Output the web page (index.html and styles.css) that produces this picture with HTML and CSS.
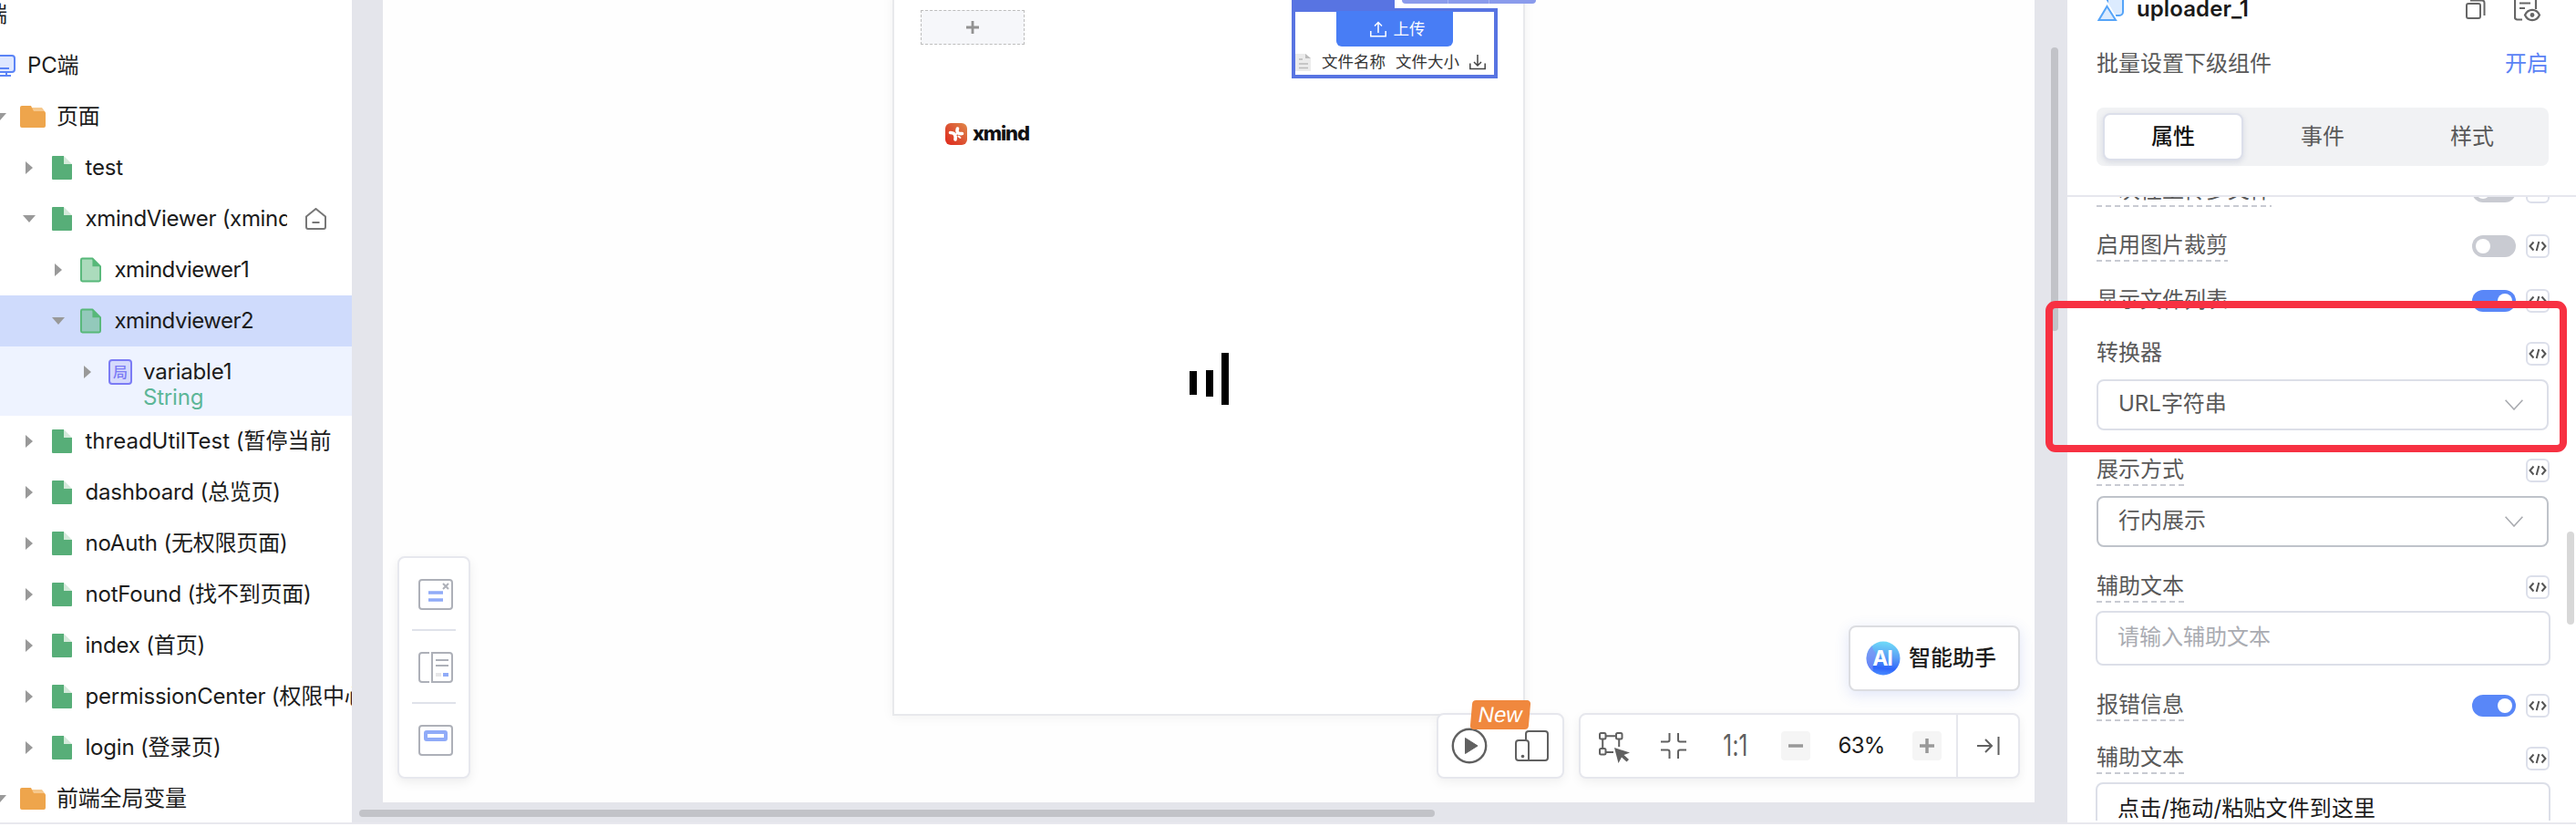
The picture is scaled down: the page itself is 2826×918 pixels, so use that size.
FILE: index.html
```html
<!DOCTYPE html>
<html lang="zh-CN">
<head>
<meta charset="utf-8">
<title>uploader_1</title>
<link rel="stylesheet" href="styles.css">
</head>
<body>
<svg class="defs" width="0" height="0">
  <symbol id="file" viewBox="0 0 22 26"><path fill="#d5eadb" d="M13 0v9h9z"/><path fill="#57ae78" d="M1 0h12v9h9v16a1 1 0 0 1-1 1H1a1 1 0 0 1-1-1V1a1 1 0 0 1 1-1z"/></symbol>
  <symbol id="view" viewBox="0 0 24 28"><path fill="#57b879" fill-opacity=".5" stroke="#57b879" stroke-width="2" stroke-linejoin="round" d="M2.500 1H14l9 9v15.500a1.500 1.500 0 0 1-1.500 1.500h-19A1.500 1.500 0 0 1 1 25.500v-23A1.500 1.500 0 0 1 2.500 1z"/><path fill="#57b879" d="M14 1v9h9z"/></symbol>
  <symbol id="folder" viewBox="0 0 28 24"><path fill="#f6c88c" d="M12 2h12l3 4v4H12z"/><path fill="#eea54c" d="M2 0h10l3 6h11a2 2 0 0 1 2 2v14a2 2 0 0 1-2 2H2a2 2 0 0 1-2-2V2a2 2 0 0 1 2-2z"/></symbol>
  <symbol id="code" viewBox="0 0 26 26"><rect x="1" y="1" width="24" height="24" rx="5" fill="#fff" stroke="#dcdfea" stroke-width="2"/><path fill="none" stroke="#555" stroke-width="2" d="M8.500 8.500 4.500 13l4 4.500M17.500 8.500l4 4.500-4 4.500M14.300 8l-2.600 10"/></symbol>
  <symbol id="chev" viewBox="0 0 20 12"><path fill="none" stroke="#a9abb0" stroke-width="1.600" d="M.6.8 10 11 19.400.8"/></symbol>
</svg>

<main class="app">
  <aside class="tree">
    <div class="row clipped">端</div>
    <div class="row pc">
      <svg class="ic-pc" width="28" height="24" viewBox="0 0 28 24"><rect x="1" y="1" width="26" height="18" rx="3" fill="#dfe8ff" stroke="#5b84f6" stroke-width="2"/><path stroke="#5b84f6" stroke-width="2" d="M6 15h15M5 23h18M10 19v4M18 19v4"/></svg>
      <span>PC端</span>
    </div>
    <div class="row l1"><i class="down"></i><svg class="ic"><use href="#folder"/></svg><span>页面</span></div>
    <div class="row l2"><i class="right"></i><svg class="ic"><use href="#file"/></svg><span>test</span></div>
    <div class="row l2"><i class="down"></i><svg class="ic"><use href="#file"/></svg><span class="cut">xmindViewer (xmindViewer)</span>
      <svg class="home" width="23" height="24" viewBox="0 0 23 24"><path fill="none" stroke="#777" stroke-width="2" stroke-linejoin="round" d="M1 9.500 11.500 1 22 9.500V21a2 2 0 0 1-2 2H3a2 2 0 0 1-2-2zM7.500 16h8"/></svg></div>
    <div class="row l3"><i class="right"></i><svg class="ic"><use href="#view"/></svg><span>xmindviewer1</span></div>
    <div class="row l3 selected"><i class="down"></i><svg class="ic"><use href="#view"/></svg><span>xmindviewer2</span></div>
    <div class="child">
      <div class="row l4"><i class="right"></i><b class="badge">局</b><span>variable1</span></div>
      <div class="type">String</div>
    </div>
    <div class="row l2"><i class="right"></i><svg class="ic"><use href="#file"/></svg><span class="wide">threadUtilTest (暂停当前</span></div>
    <div class="row l2"><i class="right"></i><svg class="ic"><use href="#file"/></svg><span>dashboard (总览页)</span></div>
    <div class="row l2"><i class="right"></i><svg class="ic"><use href="#file"/></svg><span>noAuth (无权限页面)</span></div>
    <div class="row l2"><i class="right"></i><svg class="ic"><use href="#file"/></svg><span>notFound (找不到页面)</span></div>
    <div class="row l2"><i class="right"></i><svg class="ic"><use href="#file"/></svg><span>index (首页)</span></div>
    <div class="row l2"><i class="right"></i><svg class="ic"><use href="#file"/></svg><span>permissionCenter (权限中心)</span></div>
    <div class="row l2"><i class="right"></i><svg class="ic"><use href="#file"/></svg><span>login (登录页)</span></div>
    <div class="row l1"><i class="down"></i><svg class="ic"><use href="#folder"/></svg><span>前端全局变量</span></div>
  </aside>

  <section class="stage">
    <div class="canvas">
      <div class="page">
        <div class="slot"><svg width="14" height="14" viewBox="0 0 14 14"><path stroke="#929292" stroke-width="2.800" d="M7 0v14M0 7h14"/></svg></div>
        <div class="logo">
          <svg width="24" height="24" viewBox="0 0 24 24"><defs><linearGradient id="lg" x1="1" y1="0" x2="0" y2="1"><stop offset="0" stop-color="#e08a4a"/><stop offset=".5" stop-color="#dc5433"/><stop offset="1" stop-color="#e0281c"/></linearGradient></defs><rect width="24" height="24" rx="6" fill="url(#lg)"/><path fill="none" stroke="#fff" stroke-width="3.600" stroke-linecap="round" d="M13.500 6c-1.500 4 .5 6 5 5.500M5.500 10.500c4.500 0 6.500 3 5.500 7.500"/><path stroke="#fff" stroke-width="2" stroke-linecap="round" d="m10.500 13 3.500-2M14.500 14.500l2 1.500"/></svg>
          <strong>xmind</strong>
        </div>
        <div class="bars"><i></i><i></i><i></i></div>
        <div class="sel-tag"></div>
        <div class="sel-tools"><i></i><i></i><i></i></div>
        <div class="uploader">
          <div class="upbtn"><svg width="18" height="18" viewBox="0 0 18 18"><path fill="none" stroke="#fff" stroke-width="1.500" d="M9 13V1.500M5 5.500l4-4 4 4M.8 11v5.800h16.400V11"/></svg>上传</div>
          <div class="files">
            <svg width="17" height="19" viewBox="0 0 17 19"><path fill="#ebebeb" d="M0 0h11l6 5v14H0z"/><path fill="#bbb" d="M11 0v5h6z"/><path stroke="#bbb" stroke-width="1.500" d="M4 6h4M4 11h10M4 15.500h10"/></svg>
            <span>文件名称</span><span>文件大小</span>
            <svg width="18" height="17" viewBox="0 0 18 17"><path fill="none" stroke="#444" stroke-width="1.500" d="M9 0v12M5 8l4 4 4-4M.8 9.500v6h16.400v-6"/></svg>
          </div>
        </div>
      </div>

      <div class="dock">
        <svg width="38" height="34" viewBox="0 0 38 34"><rect x="1" y="1" width="36" height="32" rx="3" fill="#fff" stroke="#adb0b8" stroke-width="2"/><path stroke="#90abf8" stroke-width="3.500" d="M11 15h16M11 23h16"/><path stroke="#adb0b8" stroke-width="2" d="m27 5 6 6M33 5l-6 6"/></svg>
        <hr>
        <svg width="38" height="34" viewBox="0 0 38 34"><path fill="none" stroke="#adb0b8" stroke-width="2" d="M12 1H4a3 3 0 0 0-3 3v26a3 3 0 0 0 3 3h8M15 1h19a3 3 0 0 1 3 3v26a3 3 0 0 1-3 3H15zM19 9h14M19 15h14"/><path fill="#e6e6e8" d="M19 23h6v4h-6z"/><path fill="#90abf8" d="M27 23h6v4h-6z"/></svg>
        <hr>
        <svg width="38" height="34" viewBox="0 0 38 34"><rect x="1" y="1" width="36" height="32" rx="3" fill="#fff" stroke="#adb0b8" stroke-width="2"/><rect x="8" y="8" width="22" height="8" rx="1" fill="#fff" stroke="#90abf8" stroke-width="4"/></svg>
      </div>

      <div class="ai">
        <svg width="38" height="38" viewBox="0 0 38 38"><defs><linearGradient id="ag" x1=".6" y1="0" x2=".5" y2="1"><stop offset="0" stop-color="#6fdcf8"/><stop offset=".45" stop-color="#5ba0f5"/><stop offset=".8" stop-color="#2f66fb"/><stop offset="1" stop-color="#4b8dff"/></linearGradient></defs><circle cx="19" cy="19" r="18.500" fill="url(#ag)"/><path fill="#7f92f5" opacity=".7" d="M7 5C-1 12-2 26 8 33c-2-8 4-12 3-18-1-5-4-4-4-10z"/><text x="18" y="27" text-anchor="middle" class="ai-mark">AI</text></svg>
        <span>智能助手</span>
      </div>

      <div class="bottom">
        <div class="box run">
          <svg width="40" height="40" viewBox="0 0 40 40"><circle cx="20" cy="20" r="18.200" fill="none" stroke="#606060" stroke-width="2.400"/><path fill="#606060" stroke="#606060" stroke-linejoin="round" d="M15.500 11.500 29 20l-13.500 8.500z"/></svg>
          <svg width="37" height="34" viewBox="0 0 37 34"><path fill="none" stroke="#606060" stroke-width="2" d="M12 10V4a3 3 0 0 1 3-3h18a3 3 0 0 1 3 3v26a3 3 0 0 1-3 3H4a3 3 0 0 1-3-3V14a3 3 0 0 1 3-3h8a3 3 0 0 1 3 3v19"/><circle cx="8.500" cy="28.500" r="1.800" fill="#606060"/></svg>
          <div class="new"><span>New</span></div>
        </div>
        <div class="box zoom">
          <svg width="34" height="34" viewBox="0 0 34 34"><g fill="none" stroke="#606060" stroke-width="2"><rect x="1" y="1" width="6.500" height="6.500" rx="1.500"/><rect x="19" y="1" width="6.500" height="6.500" rx="1.500"/><rect x="1" y="18" width="6.500" height="6.500" rx="1.500"/><path d="M7.500 4.200H19M4.200 7.500V18M22.200 7.500V16M7.500 22H16"/></g><path fill="#606060" d="m17 17 17 5.500-6.500 2.500 5.500 5-2.500 2.500-5.500-5-3.500 6.500z"/></svg>
          <svg width="28" height="28" viewBox="0 0 28 28"><path fill="none" stroke="#606060" stroke-width="2" d="M9.500 0v7.500a2 2 0 0 1-2 2H0M19 0v7.500a2 2 0 0 0 2 2h7M9.500 28v-7.500a2 2 0 0 0-2-2H0M19 28v-7.500a2 2 0 0 1 2-2h7"/></svg>
          <span class="ratio">1:1</span>
          <i class="sq"><svg width="16" height="16"><path stroke="#999" stroke-width="3.500" d="M0 8h16"/></svg></i>
          <span class="pct">63%</span>
          <i class="sq"><svg width="16" height="16"><path stroke="#999" stroke-width="3.500" d="M0 8h16M8 0v16"/></svg></i>
          <span class="end"><svg width="25" height="20" viewBox="0 0 25 20"><path fill="none" stroke="#606060" stroke-width="2" d="M0 10h16M9 3l7 7-7 7M23.500 0v20"/></svg></span>
        </div>
      </div>
    </div>
    <div class="hbar"></div>
    <div class="vbar"></div>
  </section>

  <aside class="panel">
    <header class="head">
      <div class="title">
        <svg class="shape" width="29" height="31" viewBox="0 0 29 31"><path fill="#dcebfe" stroke="#55a4f8" stroke-width="2" d="M11 15V7a4 4 0 0 1 4-4h9a4 4 0 0 1 4 4v13a4 4 0 0 1-4 4h-4"/><path fill="#dcebfe" stroke="#fff" stroke-width="5" d="M10.500 13 20 29H1z"/><path fill="#dcebfe" stroke="#55a4f8" stroke-width="2" d="M10.500 14 20 29H1.500z"/></svg>
        <b>uploader_1</b>
        <svg class="copy" width="22" height="24" viewBox="0 0 22 24"><g fill="none" stroke="#666" stroke-width="2"><rect x="1" y="7" width="15" height="16" rx="2"/><path d="M5 3.500h13a2.500 2.500 0 0 1 2.500 2.500v14"/></g></svg>
        <svg width="29" height="32" viewBox="0 0 29 32"><g fill="none" stroke="#666" stroke-width="2.200"><path d="M24 18V3H1v24a2.500 2.500 0 0 0 2.500 2.500H9M6 11.500h12M6 17h6"/><path d="M12 24.500c3.500-7.500 12.500-7.500 16 0-3.500 7.500-12.500 7.500-16 0z"/></g><circle cx="20" cy="24.500" r="2.400" fill="#666"/></svg>
      </div>
      <div class="batch"><span>批量设置下级组件</span><a>开启</a></div>
      <nav class="tabs"><span class="on">属性</span><span>事件</span><span>样式</span></nav>
    </header>
    <div class="form">
      <div class="field f1"><label class="dash">一次性上传多文件</label><i class="sw"></i><svg class="code"><use href="#code"/></svg></div>
      <div class="field"><label class="dash">启用图片裁剪</label><i class="sw"></i><svg class="code"><use href="#code"/></svg></div>
      <div class="field"><label>显示文件列表</label><i class="sw on"></i><svg class="code"><use href="#code"/></svg></div>
      <div class="field f4"><label>转换器</label><svg class="code"><use href="#code"/></svg></div>
      <div class="select"><span>URL字符串</span><svg width="20" height="12"><use href="#chev"/></svg></div>
      <div class="field f5"><label class="dash">展示方式</label><svg class="code"><use href="#code"/></svg></div>
      <div class="select dark"><span>行内展示</span><svg width="20" height="12"><use href="#chev"/></svg></div>
      <div class="field f5"><label class="dash">辅助文本</label><svg class="code"><use href="#code"/></svg></div>
      <div class="input">请输入辅助文本</div>
      <div class="field f6"><label class="dash">报错信息</label><i class="sw on"></i><svg class="code"><use href="#code"/></svg></div>
      <div class="field f7"><label class="dash">辅助文本</label><svg class="code"><use href="#code"/></svg></div>
      <div class="input filled">点击/拖动/粘贴文件到这里</div>
    </div>
    <div class="pbar"></div>
  </aside>
</main>
<div class="mark"></div>
</body>
</html>
```

FILE: styles.css
```css
* { box-sizing: border-box; }
body { margin: 0; width: 2826px; height: 918px; overflow: hidden; background: #fff; position: relative;
  font: 24px/32px Inter, "Noto Sans CJK SC", sans-serif; color: #1c1c1c; }
svg { display: block; flex: none; }
.defs { position: absolute; }
.app { display: flex; height: 904px; border-bottom: 2px solid #e8e8ee; }

/* page tree */
.tree { width: 386px; flex: none; overflow: hidden; }
.row { height: 56px; display: flex; align-items: center; white-space: nowrap; letter-spacing: -.2px; }
.tree .clipped { height: 44px; padding-bottom: 12px; text-indent: -16px; }
.pc { gap: 13px; }
.ic-pc { margin-left: -11px; }
.row > i { width: 14px; flex: none; display: flex; justify-content: center; }
.right::before { content: ""; border-left: 8px solid #999; border-top: 7px solid transparent; border-bottom: 7px solid transparent; }
.down::before { content: ""; border-top: 8px solid #999; border-left: 7px solid transparent; border-right: 7px solid transparent; }
.l1 > i { margin-left: -7px; margin-right: 15px; }
.l1 .ic { width: 28px; height: 24px; margin-right: 12px; }
.l2 { padding-left: 25px; }
.l2 .ic { width: 22px; height: 26px; margin: 0 14.5px 0 18px; }
.l2 .wide { letter-spacing: 0; }
.l3 { padding-left: 57px; letter-spacing: -.5px; }
.l3 .ic { width: 23px; height: 28px; margin: 0 14.5px 0 17px; }
.l4 { padding-left: 89px; }
.cut { width: 221px; overflow: hidden; letter-spacing: -.3px; }
.home { margin-left: 20px; }
.selected { background: #cfdbfc; }
.child { height: 76px; background: #eef3ff; }
.type { padding-left: 157px; margin-top: -16px; color: #5cb697; letter-spacing: -.2px; }
.badge { width: 26px; height: 28px; margin: 0 12px 0 16px; border: 2px solid #7b7bf5; border-radius: 4px; background: #d5d9fc;
  color: #7b7bf5; font-size: 16px; font-weight: 500; line-height: 24px; text-align: center; letter-spacing: 0; }

/* stage */
.stage { flex: 1; background: #e4e5eb; padding: 0 36px 22px 34px; position: relative; }
.canvas { height: 880px; width: 1812px; background: #fefefe; position: relative; overflow: hidden; }
.page { position: absolute; left: 559px; top: -10px; width: 694px; height: 795px; border: 2px solid #e8e9ec; background: #fff; box-shadow: 0 2px 12px rgba(0,0,0,.05); }
.slot { position: absolute; left: 29px; top: 19px; width: 114px; height: 38px; border: 1.5px dashed #bdbdbd; background: #f6f7fa; display: flex; align-items: center; justify-content: center; }
.logo { position: absolute; left: 56px; top: 143px; display: flex; align-items: center; gap: 6px; color: #111; }
.logo strong { font: 800 22px/24px Inter, sans-serif; letter-spacing: -1.2px; margin-top: -3px; }
.bars { position: absolute; left: 324px; top: 395px; height: 57px; display: flex; gap: 9.500px; align-items: center; }
.bars i { width: 8px; background: #000; height: 26px; margin-top: 9px; }
.bars i:nth-child(2) { height: 29px; }
.bars i:nth-child(3) { height: 57px; margin: 0; }
.sel-tag { position: absolute; left: 436px; top: 0; width: 113px; height: 18px; background: #5874e2; }
.sel-tools { position: absolute; left: 557px; top: 0; width: 147px; height: 12px; background: #8a9bec; border-radius: 0 0 4px 4px; display: flex; }
.sel-tools i { width: 51px; border-right: 1px solid #a9b6f2; }
.sel-tools i:nth-child(2) { width: 45px; }
.sel-tools i:nth-child(3) { border: 0; }
.uploader { position: absolute; left: 436px; top: 17px; width: 226px; height: 77px; border: 4px solid #5874e2; display: flex; flex-direction: column; align-items: center; font-size: 17.5px; line-height: 24px; letter-spacing: 0; }
.upbtn { width: 128px; height: 39px; background: #487df5; border-radius: 0 0 6px 6px; color: #fff; display: flex; align-items: center; justify-content: center; gap: 8px; padding-left: 6px; margin-top: -1px; }
.files { width: 100%; display: flex; align-items: center; margin-top: 5px; color: #333; }
.files span:nth-of-type(1) { margin-left: 12px; }
.files span:nth-of-type(2) { margin: 0 11px; }

.dock { position: absolute; left: 16px; top: 610px; width: 80px; height: 244px; border: 2px solid #e7e8ee; border-radius: 8px; background: #fff; box-shadow: 0 4px 12px rgba(0,0,0,.07); padding: 23px 0 0 14px; }
.dock svg { margin-left: 7px; }
.dock hr { width: 48px; height: 2px; border: 0; background: #dfe2ea; margin: 21px 0 23px; }

.ai { position: absolute; left: 1608px; top: 686px; width: 188px; height: 72px; border: 2px solid #dcdde1; border-radius: 8px; background: #fff; box-shadow: 0 4px 16px rgba(70,100,220,.16); display: flex; align-items: center; gap: 9px; padding-left: 17px; font-weight: 500; }
.ai-mark { font: 700 23px Inter, sans-serif; fill: #fff; letter-spacing: -1px; }
.bottom { position: absolute; left: 1156px; top: 782px; display: flex; gap: 16px; }
.box { height: 72px; border: 2px solid #e6e7ed; border-radius: 8px; background: #fff; box-shadow: 0 4px 12px rgba(0,0,0,.06); display: flex; align-items: center; }
.run { width: 140px; padding-left: 14px; gap: 30px; position: relative; }
.new { position: absolute; left: 36px; top: -16px; width: 64px; height: 32px; border-radius: 4px; background: #f0883e; transform: skewX(-5deg); color: #fff; text-align: center; font: 24px/32px "Liberation Sans", sans-serif; }
.new span { display: block; transform: skewX(-5deg); }
.zoom { width: 484px; padding-left: 20px; }
.zoom > svg:first-child { margin-top: 4px; }
.zoom > svg + svg { margin-left: 34px; }
.ratio { width: 32px; margin: 0 34px 0 38px; text-align: center; color: #606060; letter-spacing: .3px; white-space: nowrap; transform: scaleY(1.35); }
.sq { width: 32px; height: 32px; border-radius: 4px; background: #f5f5f5; display: flex; align-items: center; justify-content: center; }
.pct { width: 112px; text-align: center; letter-spacing: -.8px; }
.end { height: 68px; margin-left: 16px; border-left: 2px solid #e6e7ed; padding: 24px 0 0 21px; }
.hbar { position: absolute; left: 8px; top: 888px; width: 1180px; height: 8px; border-radius: 4px; background: #c2c3c8; }
.vbar { position: absolute; right: 10px; top: 52px; width: 8px; height: 311px; border-radius: 4px; background: #c2c3c8; }

/* property panel */
.panel { width: 558px; flex: none; background: #fff; position: relative; display: flex; flex-direction: column; color: #595959; }
.head { height: 216px; flex: none; border-bottom: 2px solid #e6e7ee; padding: 0 30px 0 32px; }
.title { height: 32px; margin-top: -8px; display: flex; align-items: center; color: #1a1a1a; }
.title b { margin: 3px auto 0 14px; font-weight: 600; letter-spacing: .1px; }
.title .shape { margin-left: 1px; }
.title .copy { margin: 2px 31px 0 0; }
.title svg:last-child { margin-right: 9px; }
.batch { display: flex; justify-content: space-between; margin-top: 30px; }
.batch a { color: #5b82f5; }
.tabs { margin-top: 32px; height: 64px; padding: 0 2px; border-radius: 8px; background: #f1f2f4; display: flex; align-items: center; }
.tabs span { width: 154px; height: 52px; margin: 0 5px; line-height: 48px; text-align: center; border: 2px solid transparent; }
.tabs .on { border-color: #dcdfea; border-radius: 8px; background: #fff; color: #111; font-weight: 500; box-shadow: 0 2px 6px rgba(60,70,120,.14); }
.form { height: 684px; overflow: hidden; padding: 0 29px 0 32px; }
.field { height: 60px; display: flex; align-items: flex-start; padding-top: 6px; }
.field label { height: 34px; line-height: 31px; margin-right: auto; }
.field .dash { background: repeating-linear-gradient(90deg, #c8cad2 0 6px, transparent 6px 10px) bottom / 100% 2px no-repeat; }
.f1 { margin-top: -29px; }
.sw { width: 48px; height: 24px; margin-top: 5px; border-radius: 12px; background: #c9cbd2; padding: 4px; display: flex; }
.sw::before { content: ""; width: 16px; height: 16px; border-radius: 50%; background: #fff; }
.sw.on { background: #5987f8; justify-content: flex-end; }
.code { width: 26px; height: 26px; margin: 4px 0 0 11px; }
.f4 { margin-top: -3px; height: 52px; padding-top: 7px; }
.select { height: 56px; margin-right: 1px; border: 2px solid #dcdfe8; border-radius: 8px; display: flex; align-items: center; justify-content: space-between; padding: 0 26px 0 22px; }
.select span { margin-top: -2px; }
.dark { border-color: #bfc3ca; }
.f5 { height: 72px; padding-top: 27px; }
.input { height: 60px; margin: -2px -1px 0 -1px; border: 2px solid #dcdfe8; border-radius: 8px; line-height: 54px; padding-left: 22px; color: #aaacb2; }
.f6 { height: 70px; padding-top: 27px; }
.f7 { height: 60px; padding-top: 15px; }
.filled { color: #1c1c1c; height: 80px; letter-spacing: .15px; }
.pbar { position: absolute; left: 548px; top: 583px; width: 8px; height: 102px; border-radius: 4px; background: #d8d8d8; }

/* highlight frame around the converter field */
.mark { position: absolute; left: 2244px; top: 330px; width: 572px; height: 166px; border: 8px solid #f73142; border-radius: 11px; }
```
